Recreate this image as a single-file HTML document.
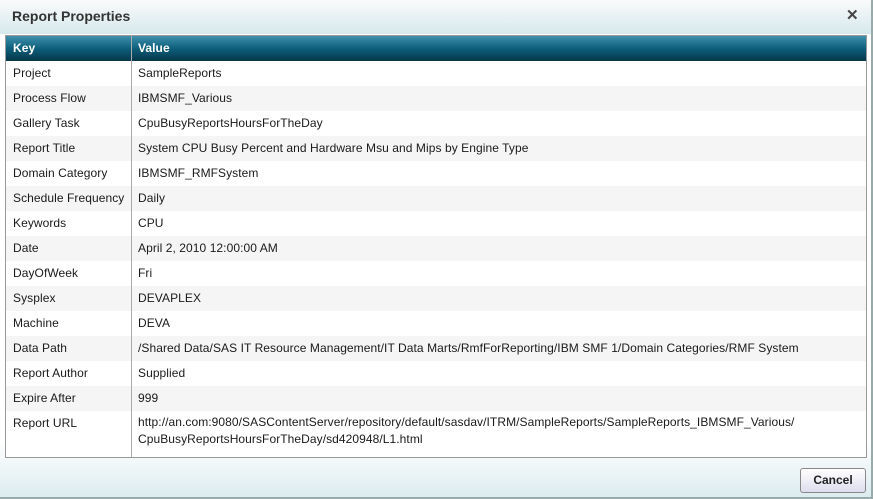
<!DOCTYPE html>
<html><head><style>
body{margin:0;width:873px;height:499px;overflow:hidden;font-family:"Liberation Sans",sans-serif;font-size:12px;color:#1a1a1a;background:#fff}
.dlg{position:absolute;left:0;top:0;width:871px;height:497px;border-right:2px solid #9aa;border-bottom:2px solid #9aa;background:linear-gradient(#fff 0,#fff 440px,#dcecef 497px)}
.title{position:absolute;left:0;top:0;width:871px;height:34px;background:linear-gradient(#fafbfb,#d6e8ec);}
.title span{position:absolute;left:12px;top:8px;font-weight:bold;font-size:14px;color:#333}
.x{position:absolute;left:846px;top:6px;font-size:15px;font-weight:bold;color:#444}
.tbl{position:absolute;left:5px;top:35px;width:860px;height:421px;border:1px solid #999;background:#fff;overflow:hidden;letter-spacing:0.07px}
.hdr{height:25px;background:linear-gradient(#3e90ac,#0d5f7c 50%,#07364a);color:#fff;font-weight:bold;position:relative}
.r{position:relative;height:25px}
.r:nth-child(odd){background:#f5f5f5}
.k,.v{position:absolute;top:5px}
.k{left:7px}.v{left:132px}
.div{position:absolute;left:125px;top:0;width:1px;height:421px;background:#aaa}
.btn{position:absolute;left:800px;top:468px;width:64px;height:23px;border:1px solid #888;border-radius:3px;background:linear-gradient(#fff,#dde);font-weight:bold;text-align:center;line-height:23px;color:#222}
</style></head><body><div class="dlg">
<div class="title"><span>Report Properties</span><div class="x">✕</div></div>
<div class="tbl">
<div class="hdr"><span class="k">Key</span><span class="v">Value</span></div>
<div class="r"><span class="k">Project</span><span class="v">SampleReports</span></div>
<div class="r"><span class="k">Process Flow</span><span class="v">IBMSMF_Various</span></div>
<div class="r"><span class="k">Gallery Task</span><span class="v">CpuBusyReportsHoursForTheDay</span></div>
<div class="r"><span class="k">Report Title</span><span class="v">System CPU Busy Percent and Hardware Msu and Mips by Engine Type</span></div>
<div class="r"><span class="k">Domain Category</span><span class="v">IBMSMF_RMFSystem</span></div>
<div class="r"><span class="k">Schedule Frequency</span><span class="v">Daily</span></div>
<div class="r"><span class="k">Keywords</span><span class="v">CPU</span></div>
<div class="r"><span class="k">Date</span><span class="v">April 2, 2010 12:00:00 AM</span></div>
<div class="r"><span class="k">DayOfWeek</span><span class="v">Fri</span></div>
<div class="r"><span class="k">Sysplex</span><span class="v">DEVAPLEX</span></div>
<div class="r"><span class="k">Machine</span><span class="v">DEVA</span></div>
<div class="r"><span class="k">Data Path</span><span class="v">/Shared Data/SAS IT Resource Management/IT Data Marts/RmfForReporting/IBM SMF 1/Domain Categories/RMF System</span></div>
<div class="r"><span class="k">Report Author</span><span class="v">Supplied</span></div>
<div class="r"><span class="k">Expire After</span><span class="v">999</span></div>
<div class="r" style="height:40px"><span class="k">Report URL</span><span class="v" style="line-height:17px;top:3px">http://an.com:9080/SASContentServer/repository/default/sasdav/ITRM/SampleReports/SampleReports_IBMSMF_Various/<br>CpuBusyReportsHoursForTheDay/sd420948/L1.html</span></div>
<div class="div"></div>
</div>
<div class="btn">Cancel</div>
</div></body></html>
